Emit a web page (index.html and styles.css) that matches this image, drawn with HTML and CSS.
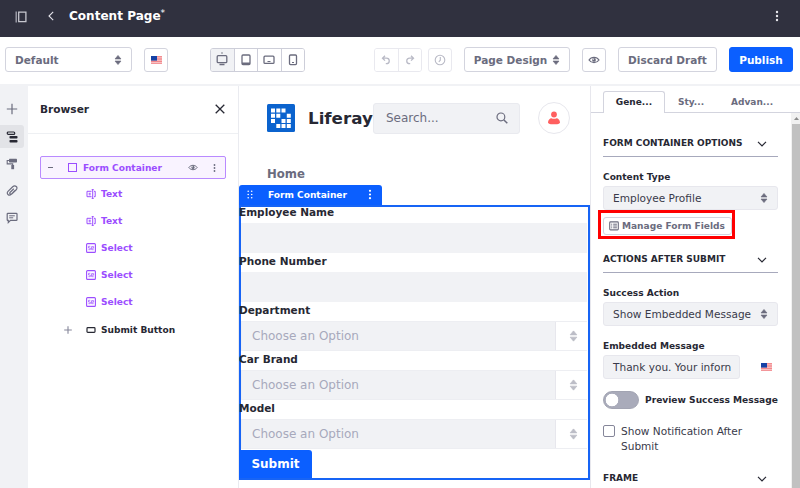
FILE: index.html
```html
<!DOCTYPE html>
<html lang="en">
<head>
<meta charset="utf-8">
<title>Content Page</title>
<link rel="stylesheet" href="styles.css">
</head>
<body>
<svg class="defs" width="0" height="0">
  <symbol id="updown" viewBox="0 0 8 10"><path d="M4 .4 7 4H1zM4 9.600 7 6H1z" fill="currentColor" stroke="currentColor" stroke-width=".6" stroke-linejoin="round"/></symbol>
  <symbol id="flag" viewBox="0 0 11 8"><path d="M0 0h11v8H0z" fill="#fbd0d0"/><path d="M0 .6h11M0 2.200h11M0 3.800h11M0 5.500h11M0 7.300h11" stroke="#f17f84" stroke-width=".9"/><path d="M0 0h6v4.600H0z" fill="#1541a5"/></symbol>
  <symbol id="eye" viewBox="0 0 12 8"><path d="M1 4C3.300.5 8.700.5 11 4 8.700 7.500 3.300 7.500 1 4z" fill="none" stroke="currentColor" stroke-width="1.200"/><circle cx="6" cy="3.900" r="1.900" fill="currentColor"/><circle cx="5.300" cy="3.200" r=".6" fill="#fff"/></symbol>
  <symbol id="dots" viewBox="0 0 4 12"><g fill="currentColor"><circle cx="2" cy="2" r="1.200"/><circle cx="2" cy="6" r="1.200"/><circle cx="2" cy="10" r="1.200"/></g></symbol>
  <symbol id="chevron" viewBox="0 0 10 6"><path d="m1 .8 4 4 4-4" fill="none" stroke="currentColor" stroke-width="1.200"/></symbol>
  <symbol id="text" viewBox="0 0 10 10"><path d="M5.500 2.300H1v5.400h4.500M8 2.300h1.200v5.400H8M6.700.6v8.800M5.700.6h2M5.700 9.400h2M2.700 4.300h2M2.700 5.800h2" fill="none" stroke="currentColor" stroke-width="1"/></symbol>
  <symbol id="select" viewBox="0 0 10 10"><rect x=".6" y=".6" width="8.800" height="8.800" rx="1" fill="none" stroke="currentColor" stroke-width="1.100"/><path d="M4.300 3.300H2.500V5h1.800v1.700H2.400M7.700 6.700H5.600V3.600h2v1.600h-2" fill="none" stroke="currentColor" stroke-width=".7"/></symbol>
</svg>
<header class="topbar">
  <svg class="panel-icon" width="12" height="12" viewBox="0 0 12 12"><path d="M1.200.5v11" stroke="#a9aab5" stroke-width="1.300"/><path d="M3.700 1.200h7.200v9.400H3.700z" fill="none" stroke="#c6c7cf" stroke-width="1.300"/></svg>
  <svg class="back-icon" width="6" height="10" viewBox="0 0 6 10"><path d="M5.200.8 1 5l4.200 4.200" fill="none" stroke="#e4e4ea" stroke-width="1.100"/></svg>
  <h1>Content Page<sup>*</sup></h1>
  <svg class="more" width="4" height="12"><use href="#dots"/></svg>
</header>
<div class="toolbar">
  <button class="btn experience">Default <svg width="8" height="10"><use href="#updown"/></svg></button>
  <button class="btn square language"><svg width="11" height="8"><use href="#flag"/></svg></button>
  <div class="group devices">
    <button class="on"><svg width="12" height="14" viewBox="0 0 12 14"><circle cx="6" cy="1" r=".7" fill="#555666"/><rect x="1.200" y="3.700" width="9.600" height="7" rx="1" fill="none" stroke="currentColor" stroke-width="1.300"/><path d="M3.500 12.600h5" stroke="currentColor" stroke-width="1.500"/></svg></button>
    <button><svg width="10" height="12" viewBox="0 0 10 12"><rect x="1" y="1" width="8" height="9.600" rx="1" fill="none" stroke="currentColor" stroke-width="1.300"/><path d="M1 9.400h8" stroke="currentColor" stroke-width="1.900"/></svg></button>
    <button><svg width="12" height="10" viewBox="0 0 12 10"><rect x="1" y="1.200" width="10" height="7.200" rx="1" fill="none" stroke="currentColor" stroke-width="1.300"/><path d="M4.500 6.500h3" stroke="currentColor"/></svg></button>
    <button><svg width="10" height="12" viewBox="0 0 10 12"><rect x="1.500" y="1" width="7" height="9.600" rx="1" fill="none" stroke="currentColor" stroke-width="1.300"/><path d="M4 8.500h2" stroke="currentColor"/></svg></button>
  </div>
  <div class="group history">
    <button><svg width="10" height="10" viewBox="0 0 10 10"><path d="M4 .8 1.500 3.200 4 5.600M1.700 3.200h3.700c3.800 0 3.800 5.400 0 5.400H4.800" fill="none" stroke="currentColor" stroke-width="1.300"/></svg></button>
    <button><svg width="10" height="10" viewBox="0 0 10 10"><path d="M6 .8l2.500 2.400L6 5.600M8.300 3.200H4.600C.8 3.200.8 8.600 4.600 8.600h.6" fill="none" stroke="currentColor" stroke-width="1.300"/></svg></button>
  </div>
  <button class="btn square faded"><svg width="12" height="12" viewBox="0 0 12 12"><circle cx="6" cy="6" r="4.800" fill="none" stroke="currentColor" stroke-width="1.100"/><path d="M6.300 3v3.200L4.800 7.800" fill="none" stroke="currentColor" stroke-width="1.100"/></svg></button>
  <button class="btn design">Page Design <svg width="8" height="10"><use href="#updown"/></svg></button>
  <button class="btn square view"><svg width="12" height="8"><use href="#eye"/></svg></button>
  <button class="btn discard">Discard Draft</button>
  <button class="btn publish">Publish</button>
</div>
<main>
  <nav class="rail">
    <a><svg width="12" height="12" viewBox="0 0 12 12"><path d="M6 .8v10.400M.8 6h10.400" stroke="currentColor" stroke-width="1.200"/></svg></a>
    <a class="on"><svg width="12" height="12" viewBox="0 0 12 12"><rect x="1.300" y="1" width="7.400" height="2.400" rx="1" fill="none" stroke="currentColor" stroke-width="1.200"/><rect x="3.500" y="4.900" width="8" height="2.600" rx=".8" fill="currentColor"/><rect x="3.500" y="8.900" width="8" height="2.600" rx=".8" fill="currentColor"/></svg></a>
    <a><svg width="12" height="12" viewBox="0 0 12 12"><rect x="3" y=".8" width="8" height="3.600" rx=".7" fill="currentColor"/><path d="M3 2.500H1.200v3.400h5.500v1.500" fill="none" stroke="currentColor" stroke-width="1.100"/><rect x="5.300" y="7" width="2.800" height="4.200" fill="currentColor"/></svg></a>
    <a><svg width="12" height="12" viewBox="0 0 12 12"><path d="M9 5.500 5.200 9.300C3 11.500-.2 8.500 2 6.300l4.700-4.500c2.500-2.400 5.800.6 3.500 3L6 8.700c-1.500 1.300-3-.2-1.800-1.500l3.600-3.500" fill="none" stroke="currentColor" stroke-width="1.200"/></svg></a>
    <a><svg width="12" height="12" viewBox="0 0 12 12"><path d="M1.900 1.300h8.400q.7 0 .7.700v5.700q0 .7-.7.700H4.500L2.300 10.500V8.400h-.4q-.7 0-.7-.7V2q0-.7.7-.7z" fill="none" stroke="currentColor" stroke-width="1.200"/><path d="M3.200 3.800h5.600M3.200 5.800h4" stroke="currentColor"/></svg></a>
  </nav>
  <aside class="browser">
    <div class="browser-head"><h2>Browser</h2><svg width="10" height="10" viewBox="0 0 10 10"><path d="m.7.7 8.600 8.600M9.300.7.7 9.300" stroke="#272833" stroke-width="1.300"/></svg></div>
    <ul class="tree">
      <li class="root"><i class="minus"></i><i class="box"></i><span>Form Container</span><svg class="eye" width="10" height="7"><use href="#eye"/></svg><svg width="3" height="10"><use href="#dots"/></svg></li>
      <li><svg width="10" height="10"><use href="#text"/></svg>Text</li>
      <li><svg width="10" height="10"><use href="#text"/></svg>Text</li>
      <li><svg width="10" height="10"><use href="#select"/></svg>Select</li>
      <li><svg width="10" height="10"><use href="#select"/></svg>Select</li>
      <li><svg width="10" height="10"><use href="#select"/></svg>Select</li>
      <li class="submit-item"><svg class="plus" width="8" height="8" viewBox="0 0 8 8"><path d="M4 .2v7.600M.2 4h7.600" stroke="#85869a" stroke-width="1.100"/></svg><svg width="10" height="10" viewBox="0 0 10 10"><rect x="1" y="2.600" width="8" height="4.800" rx=".8" fill="none" stroke="currentColor" stroke-width="1.200"/></svg>Submit Button</li>
    </ul>
  </aside>
  <section class="canvas">
    <div class="site-head">
      <svg class="logo" width="28" height="28" viewBox="0 0 28 28"><rect width="28" height="28" rx="1.500" fill="#0b63ce"/><path fill="#fff" d="M4 4.500h4v4H4zm5.300 0h4v4h-4zm5.200 0h4v4h-4zM4 9.700h4v4H4zm5.300 0h4v4h-4zm10.500 0h4v4h-4zM4 14.900h4v4H4zm10.500 0h4v4h-4zm5.300 0h4v4h-4zM9.300 20.100h4v4h-4zm5.200 0h4v4h-4zm5.300 0h4v4h-4z"/></svg>
      <strong>Liferay</strong>
      <div class="search">Search...<svg width="12" height="12" viewBox="0 0 12 12"><circle cx="4.900" cy="4.900" r="3.900" fill="none" stroke="currentColor" stroke-width="1.200"/><path d="m7.700 7.700 3.600 3.600" stroke="currentColor" stroke-width="1.500"/></svg></div>
      <div class="avatar"><svg width="12" height="14" viewBox="0 0 12 14"><circle cx="6" cy="3.500" r="2.900" fill="#ff5f5f"/><path d="M0 11.400C0 9 2 7.300 3.400 7.300c1.600.7 3.600.7 5.200 0C10 7.300 12 9 12 11.400 12 14 0 14 0 11.400z" fill="#ff5f5f"/></svg></div>
    </div>
    <div class="home">Home</div>
    <div class="form-tab"><svg width="6" height="9" viewBox="0 0 6 9"><g fill="#fff"><circle cx="1.200" cy="1.200" r=".8"/><circle cx="4.700" cy="1.200" r=".8"/><circle cx="1.200" cy="4.500" r=".8"/><circle cx="4.700" cy="4.500" r=".8"/><circle cx="1.200" cy="7.800" r=".8"/><circle cx="4.700" cy="7.800" r=".8"/></g></svg><span>Form Container</span><svg width="4" height="11"><use href="#dots"/></svg></div>
    <form class="form">
      <label>Employee Name</label><div class="field"></div>
      <label>Phone Number</label><div class="field"></div>
      <label>Department</label><div class="field pick"><span>Choose an Option</span><b><svg width="9" height="12" viewBox="0 0 8 10"><use href="#updown"/></svg></b></div>
      <label>Car Brand</label><div class="field pick"><span>Choose an Option</span><b><svg width="9" height="12" viewBox="0 0 8 10"><use href="#updown"/></svg></b></div>
      <label>Model</label><div class="field pick last"><span>Choose an Option</span><b><svg width="9" height="12" viewBox="0 0 8 10"><use href="#updown"/></svg></b></div>
      <button type="button" class="submit">Submit</button>
    </form>
  </section>
  <aside class="side">
    <div class="tabs"><span class="on">Gene...</span><span class="sty">Sty...</span><span class="adv">Advan...</span></div>
    <div class="side-body">
      <div class="options">
        <h3>FORM CONTAINER OPTIONS<svg width="10" height="6"><use href="#chevron"/></svg></h3>
        <label class="first">Content Type</label>
        <div class="control">Employee Profile<svg width="8" height="10"><use href="#updown"/></svg></div>
        <div class="manage-row"><button class="manage"><svg width="10" height="10" viewBox="0 0 10 10"><rect x=".7" y=".9" width="8.600" height="8" rx=".8" fill="none" stroke="currentColor" stroke-width="1.100"/><path d="M2.200 3.200h1M2.200 5h1M2.200 6.800h1M4.200 3.200h3.700M4.200 5h3.700M4.200 6.800h3.700" stroke="currentColor" stroke-width="1"/></svg>Manage Form Fields</button><i class="highlight"></i></div>
        <h3>ACTIONS AFTER SUBMIT<svg width="10" height="6"><use href="#chevron"/></svg></h3>
        <label class="first">Success Action</label>
        <div class="control">Show Embedded Message<svg width="8" height="10"><use href="#updown"/></svg></div>
        <label class="embedded">Embedded Message</label>
        <div class="message"><div class="control"><span>Thank you. Your inforn</span></div><svg width="11" height="8"><use href="#flag"/></svg></div>
        <div class="preview"><i class="toggle"></i>Preview Success Message</div>
        <div class="notify"><i></i><span>Show Notification After<br>Submit</span></div>
        <h3 class="frame">FRAME<svg width="10" height="6"><use href="#chevron"/></svg></h3>
      </div>
      <div class="scroll"><svg width="8" height="11" viewBox="0 0 8 11"><path d="M4.500 4 7 7H2z" fill="#8b8b8b"/></svg><i></i></div>
    </div>
  </aside>
</main>
</body>
</html>
```
FILE: styles.css
```css
* { box-sizing: border-box; }
body { margin: 0; width: 800px; height: 488px; overflow: hidden; display: flex; flex-direction: column; background: #fff; color: #272833; font: 10.5px "DejaVu Sans", sans-serif; }
svg { display: block; flex: none; }
.defs { position: absolute; }
button { font: inherit; margin: 0; padding: 0; border: 0; background: #fff; color: inherit; }
h1, h2, h3, ul { margin: 0; padding: 0; }
i { flex: none; }

.topbar { height: 37px; flex: none; display: flex; align-items: center; background: #30313f; color: #fff; padding: 0 21px 5px 15px; }
.panel-icon { margin-top: 1px; }
.back-icon { margin: 0 15px 0 21px; }
.topbar h1 { font-size: 12.050px; line-height: 20px; margin-top: -1px; white-space: nowrap; }
.topbar sup { font-size: 9px; font-weight: 400; line-height: 0; vertical-align: 4px; }
.topbar .more { margin-left: auto; color: #e7e7ed; }

.toolbar { height: 49px; flex: none; display: flex; align-items: center; padding: 0 8px 2px 5px; border-bottom: 2px solid #f1f2f5; color: #6b6c7e; }
.btn { height: 25px; flex: none; display: flex; align-items: center; justify-content: center; border: 1px solid #d3d4de; border-radius: 3px; font-weight: 700; white-space: nowrap; }
.btn.square { width: 24px; height: 24px; }
.experience { width: 127px; justify-content: space-between; padding: 0 9px; }
.language { margin-left: 12px; }
.group { display: flex; height: 24px; border: 1px solid #cdced9; border-radius: 3px; overflow: hidden; flex: none; }
.group button { flex: 1; display: flex; align-items: center; justify-content: center; }
.group button + button { border-left: 1px solid #cdced9; }
.group .on { background: #f1f2f5; }
.devices { width: 95px; margin-left: 42px; }
.devices .on svg { margin-top: -2px; }
.history { width: 48px; margin: 0 6px 0 69px; }
.history, .history button + button, .faded { border-color: #e9e9ef; color: #b9bac6; }
.design { width: 106px; margin-left: 12px; gap: 5px; }
.view { margin: 0 12px; }
.discard { width: 99px; }
.publish { width: 64px; margin-left: 12px; background: #0b5fff; border-color: #0b5fff; color: #fff; }

main { flex: 1; min-height: 0; display: flex; }
.rail { width: 28px; background: #f1f2f5; color: #6b6c7e; padding-top: 12px; }
.rail a { width: 24px; height: 23px; margin-bottom: 4px; display: flex; align-items: center; justify-content: center; border-radius: 0 3px 3px 0; }
.rail a:first-child { padding-bottom: 1px; }
.rail .on { background: #e2e3e7; color: #272833; }
.browser { width: 211px; border-right: 1px solid #eaebf0; }
.browser-head { height: 48px; display: flex; align-items: center; justify-content: space-between; padding: 0 13px 2px 12px; border-bottom: 1px solid #eef0f3; }
.browser h2 { font-size: 10.600px; }
.tree { list-style: none; padding: 20px 12px 0 12px; font-size: 9.050px; font-weight: 700; color: #9b4dff; }
.tree li { height: 27.100px; display: flex; align-items: center; padding-left: 46px; gap: 5px; }
.tree .root { height: 23px; margin: 2px 0 1.500px; padding: 0 9px 0 7px; border: 1px solid #b98aff; border-radius: 2px; background: #f9f3ff; gap: 0; }
.minus { width: 5px; height: 1px; background: #6b6c7e; }
.box { width: 9px; height: 9px; border: 1px solid #9b4dff; margin: 0 6px 0 15px; }
.root svg { color: #6b6c7e; }
.root .eye { margin: 0 15px 0 auto; }
.tree .submit-item { color: #272833; padding-left: 24px; }
.plus { margin-right: 9px; }

.canvas { width: 351px; display: flex; flex-direction: column; }
.site-head { height: 32px; margin: 16px 20px 0 28px; display: flex; align-items: center; flex: none; }
.site-head strong { font-size: 16.700px; width: 65px; margin-left: 13px; white-space: nowrap; }
.search { width: 147px; height: 31px; border-radius: 3px; background: #f1f2f5; border: 1px solid #e9eaef; color: #6b6c7e; display: flex; align-items: center; justify-content: space-between; padding: 0 11px 0 12px; font-size: 12px; }
.avatar { width: 32px; height: 32px; margin-left: auto; border: 1px solid #e7e7ed; border-radius: 50%; display: flex; align-items: center; justify-content: center; }
.home { height: 20px; line-height: 20px; margin: 30px 0 0 28px; font-size: 11.700px; font-weight: 700; color: #6b6c7e; }
.form-tab { width: 143px; height: 20px; margin-top: 1px; padding: 0 10px 1px 8px; display: flex; align-items: center; background: #0b5fff; color: #fff; font-size: 9.050px; font-weight: 700; border-radius: 3px 3px 0 0; }
.form-tab span { margin: 0 auto 0 15px; }
.form { height: 275px; flex: none; box-shadow: inset 0 0 0 2px #1764f5; padding-top: 2px; }
.form label { display: block; height: 16px; line-height: 11px; font-weight: 700; }
.field { height: 30px; margin: 0 3px 3px 2px; background: #f1f2f5; }
.field.last { margin-bottom: 1px; }
.pick { display: flex; align-items: center; color: #a7a9bc; font-size: 12px; border: 1px solid #edeef2; border-right: 0; }
.pick span { padding-left: 10px; }
.pick b { width: 32px; height: 28px; margin-left: auto; padding-left: 3px; background: #fff; border-left: 1px solid #e7e7ed; display: flex; align-items: center; justify-content: center; color: #bcbdc6; }
.submit { display: block; width: 73px; height: 28px; background: #0b5fff; color: #fff; font-size: 12px; font-weight: 700; border-radius: 0 3px 0 0; }

.side { width: 210px; border-left: 1px solid #e7e7ed; display: flex; flex-direction: column; }
.tabs { height: 27px; flex: none; padding: 5px 0 0 12px; display: flex; border-bottom: 1px solid #d3d4de; font-size: 9px; font-weight: 700; color: #6b6c7e; line-height: 20px; }
.tabs .on { width: 62px; height: 22px; border: 1px solid #d3d4de; border-bottom: 0; border-radius: 3px 3px 0 0; background: #fff; color: #272833; text-align: center; }
.tabs span { padding-top: 1px; }
.tabs .on { padding-top: 0; }
.sty { margin-left: 13px; }
.adv { margin-left: 27px; }
.side-body { flex: 1; min-height: 0; display: flex; }
.options { width: 187px; padding: 18px 0 0 12px; }
.options h3 { height: 26px; font-size: 9px; line-height: 25px; border-bottom: 1px solid #a7a9bc; display: flex; align-items: center; justify-content: space-between; padding-right: 11px; white-space: nowrap; }
.options label { display: block; font-size: 9.050px; font-weight: 700; line-height: 12px; }
.options .first { margin: 14px 0 3px; }
.control { height: 24px; display: flex; align-items: center; justify-content: space-between; border: 1px solid #e7e7ed; border-radius: 3px; background: #f1f2f5; padding: 0 9px; color: #393a4a; font-size: 10.550px; white-space: nowrap; }
.control svg { color: #6b6c7e; }
.manage-row { position: relative; padding: 7px 0 12px; }
.manage { width: 129px; height: 18px; display: flex; align-items: center; gap: 3px; padding-left: 5px; border: 1px solid #d3d4de; border-radius: 3px; font-size: 9.050px; font-weight: 700; color: #6b6c7e; white-space: nowrap; }
.highlight { position: absolute; left: -5px; top: 0; width: 137px; height: 29px; border: 3px solid #f00; }
.embedded { margin: 14px 0 3px; }
.message { display: flex; align-items: center; justify-content: space-between; padding-right: 6px; }
.message .control { width: 137px; }
.preview { height: 18px; margin-top: 12px; display: flex; align-items: center; gap: 6px; font-size: 9.100px; font-weight: 700; white-space: nowrap; }
.toggle { width: 36px; height: 18px; border-radius: 9px; border: 1px solid #a2a4b2; background: radial-gradient(circle at 8px 8px, #fff 6px, #a9abba 6.600px); }
.notify { display: flex; gap: 6px; margin-top: 15px; line-height: 15.200px; color: #393a4a; font-size: 10.550px; }
.notify i { width: 12px; height: 12px; margin-top: 1px; border: 1px solid #858699; border-radius: 2px; }
.options .frame { margin-top: 12px; }
.scroll { width: 9px; margin-left: auto; background: #f1f1f1; padding-left: 1px; display: flex; flex-direction: column; }
.scroll i { flex: 1; background: #c1c1c1; }
```
